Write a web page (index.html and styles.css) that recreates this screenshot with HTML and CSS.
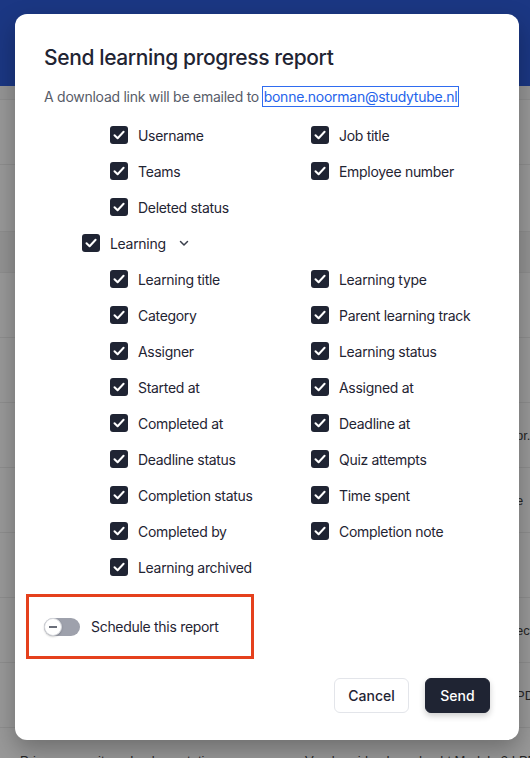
FILE: index.html
```html
<!DOCTYPE html>
<html lang="en">
<head>
<meta charset="utf-8">
<title>Send learning progress report</title>
<link rel="stylesheet" href="styles.css">
</head>
<body>
<div class="page">
  <header class="navbar"></header>
  <div class="table">
    <div class="trow thead"></div>
    <div class="trow"></div>
    <div class="trow tall"></div>
    <div class="trow band"></div>
    <div class="trow"></div>
    <div class="trow"></div>
    <div class="trow"><span class="c1"></span><span class="c2"></span><span class="c3"></span><span class="c4">pr.</span></div>
    <div class="trow"><span class="c1"></span><span class="c2"></span><span class="c3"></span><span class="c4">e</span></div>
    <div class="trow"></div>
    <div class="trow"><span class="c1"></span><span class="c2"></span><span class="c3"></span><span class="c4">ect</span></div>
    <div class="trow"><span class="c1"></span><span class="c2"></span><span class="c3"></span><span class="c4">PD</span></div>
    <div class="trow"><span class="c1">Privacy security</span><span class="c2">Implementation</span><span class="c3">Voorbereidende opdracht Module 2 LPD</span><span class="c4"></span></div>
  </div>
</div>

<div class="modal" role="dialog">
  <h1 class="title">Send learning progress report</h1>
  <p class="subtitle">A download link will be emailed to <a class="email" href="#">bonne.noorman@studytube.nl</a></p>

  <div class="grid user-grid">
    <label class="cb"><span class="box"><svg viewBox="0 0 18 18"><path d="M4.5 9.2 7.6 12.3 13.6 5.8"/></svg></span>Username</label>
    <label class="cb"><span class="box"><svg viewBox="0 0 18 18"><path d="M4.5 9.2 7.6 12.3 13.6 5.8"/></svg></span>Job title</label>
    <label class="cb"><span class="box"><svg viewBox="0 0 18 18"><path d="M4.5 9.2 7.6 12.3 13.6 5.8"/></svg></span>Teams</label>
    <label class="cb"><span class="box"><svg viewBox="0 0 18 18"><path d="M4.5 9.2 7.6 12.3 13.6 5.8"/></svg></span>Employee number</label>
    <label class="cb"><span class="box"><svg viewBox="0 0 18 18"><path d="M4.5 9.2 7.6 12.3 13.6 5.8"/></svg></span>Deleted status</label>
  </div>

  <div class="group-head">
    <label class="cb"><span class="box"><svg viewBox="0 0 18 18"><path d="M4.5 9.2 7.6 12.3 13.6 5.8"/></svg></span>Learning</label>
    <svg class="chev" viewBox="0 0 12 12"><path d="M2.5 4.5 6 8 9.5 4.5"/></svg>
  </div>

  <div class="grid learn-grid">
    <label class="cb"><span class="box"><svg viewBox="0 0 18 18"><path d="M4.5 9.2 7.6 12.3 13.6 5.8"/></svg></span>Learning title</label>
    <label class="cb"><span class="box"><svg viewBox="0 0 18 18"><path d="M4.5 9.2 7.6 12.3 13.6 5.8"/></svg></span>Learning type</label>
    <label class="cb"><span class="box"><svg viewBox="0 0 18 18"><path d="M4.5 9.2 7.6 12.3 13.6 5.8"/></svg></span>Category</label>
    <label class="cb"><span class="box"><svg viewBox="0 0 18 18"><path d="M4.5 9.2 7.6 12.3 13.6 5.8"/></svg></span>Parent learning track</label>
    <label class="cb"><span class="box"><svg viewBox="0 0 18 18"><path d="M4.5 9.2 7.6 12.3 13.6 5.8"/></svg></span>Assigner</label>
    <label class="cb"><span class="box"><svg viewBox="0 0 18 18"><path d="M4.5 9.2 7.6 12.3 13.6 5.8"/></svg></span>Learning status</label>
    <label class="cb"><span class="box"><svg viewBox="0 0 18 18"><path d="M4.5 9.2 7.6 12.3 13.6 5.8"/></svg></span>Started at</label>
    <label class="cb"><span class="box"><svg viewBox="0 0 18 18"><path d="M4.5 9.2 7.6 12.3 13.6 5.8"/></svg></span>Assigned at</label>
    <label class="cb"><span class="box"><svg viewBox="0 0 18 18"><path d="M4.5 9.2 7.6 12.3 13.6 5.8"/></svg></span>Completed at</label>
    <label class="cb"><span class="box"><svg viewBox="0 0 18 18"><path d="M4.5 9.2 7.6 12.3 13.6 5.8"/></svg></span>Deadline at</label>
    <label class="cb"><span class="box"><svg viewBox="0 0 18 18"><path d="M4.5 9.2 7.6 12.3 13.6 5.8"/></svg></span>Deadline status</label>
    <label class="cb"><span class="box"><svg viewBox="0 0 18 18"><path d="M4.5 9.2 7.6 12.3 13.6 5.8"/></svg></span>Quiz attempts</label>
    <label class="cb"><span class="box"><svg viewBox="0 0 18 18"><path d="M4.5 9.2 7.6 12.3 13.6 5.8"/></svg></span>Completion status</label>
    <label class="cb"><span class="box"><svg viewBox="0 0 18 18"><path d="M4.5 9.2 7.6 12.3 13.6 5.8"/></svg></span>Time spent</label>
    <label class="cb"><span class="box"><svg viewBox="0 0 18 18"><path d="M4.5 9.2 7.6 12.3 13.6 5.8"/></svg></span>Completed by</label>
    <label class="cb"><span class="box"><svg viewBox="0 0 18 18"><path d="M4.5 9.2 7.6 12.3 13.6 5.8"/></svg></span>Completion note</label>
    <label class="cb"><span class="box"><svg viewBox="0 0 18 18"><path d="M4.5 9.2 7.6 12.3 13.6 5.8"/></svg></span>Learning archived</label>
  </div>

  <div class="schedule">
    <span class="toggle"><span class="knob"></span></span>
    <span class="schedule-label">Schedule this report</span>
  </div>

  <div class="footer">
    <button class="btn btn-cancel" type="button">Cancel</button>
    <button class="btn btn-send" type="button">Send</button>
  </div>
</div>
</body>
</html>
```

FILE: styles.css
```css
* { box-sizing: border-box; }
html, body { margin: 0; padding: 0; }
body {
  width: 530px;
  height: 758px;
  overflow: hidden;
  background: #999999;
  font-family: "Inter", "Liberation Sans", sans-serif;
  position: relative;
}
.page { width: 530px; }
.navbar { height: 86px; background: #1b3783; }
.table { display: flex; flex-direction: column; }
.trow {
  height: 65px;
  flex: none;
  border-bottom: 1px solid #8e8e8e;
  display: grid;
  grid-template-columns: 20px 110px 175px 211px 1fr;
  align-items: center;
  font-family: "Liberation Sans", Arial, sans-serif;
  font-size: 13px;
  color: #262626;
  white-space: nowrap;
}
.trow::before { content: ""; }
.trow.thead { height: 14px; background: #959595; }
.trow.tall { height: 67px; }
.trow.band { height: 41px; background: #939393; }
.trow .c4 { overflow: hidden; }

.modal {
  position: absolute;
  left: 15px;
  top: 14px;
  width: 504px;
  height: 726px;
  background: #ffffff;
  border-radius: 12px;
  box-shadow: 0 10px 24px rgba(0,0,0,0.28);
  padding: 30px 29px 27px 29px;
  display: flex;
  flex-direction: column;
  color: #1f2433;
}
.title {
  margin: 0;
  font-size: 21px;
  line-height: 28px;
  font-weight: 500;
  letter-spacing: -0.38px;
  color: #1f2433;
}
.subtitle {
  margin: 15px 0 0 0;
  font-size: 14px;
  line-height: 20px;
  letter-spacing: -0.26px;
  color: #585c68;
}
.email {
  color: #2563eb;
  text-decoration: none;
  outline: 1px solid #2f6cf0;
  outline-offset: 0;
  padding: 1px 1px;
}
.grid {
  display: grid;
  grid-template-columns: 201px 1fr;
  grid-auto-rows: 36px;
}
.user-grid { margin: 10px 0 0 66px; }
.learn-grid { margin-left: 66px; }
.group-head {
  margin-left: 38px;
  height: 36px;
  display: flex;
  align-items: center;
}
.cb {
  display: flex;
  align-items: center;
  gap: 10px;
  font-size: 14px;
  letter-spacing: -0.3px;
  color: #1f2433;
}
.box {
  width: 18px;
  height: 18px;
  border-radius: 3px;
  background: #1f2433;
  display: inline-flex;
  flex: none;
}
.box svg { width: 18px; height: 18px; }
.box path { fill: none; stroke: #fff; stroke-width: 2; stroke-linecap: round; stroke-linejoin: round; }
.chev { width: 12px; height: 12px; margin-left: 12px; }
.chev path { fill: none; stroke: #3a3f4c; stroke-width: 1.5; stroke-linecap: round; stroke-linejoin: round; }

.schedule {
  margin: 9px 0 0 -18px;
  width: 228px;
  height: 65px;
  flex: none;
  border: 3px solid #e5401d;
  display: flex;
  align-items: center;
  padding-left: 15px;
  gap: 11px;
}
.toggle {
  width: 36px;
  height: 18px;
  border-radius: 9px;
  background: #9ea1ac;
  display: inline-flex;
  align-items: center;
  flex: none;
}
.knob {
  width: 18px;
  height: 18px;
  border-radius: 50%;
  background: #ffffff;
  border: 1px solid #d5d7dc;
  box-shadow: 0 1px 2px rgba(0,0,0,0.2);
  position: relative;
}
.knob::after {
  content: "";
  position: absolute;
  left: 4px;
  right: 4px;
  top: 7.5px;
  height: 1.5px;
  background: #6b6f7a;
}
.schedule-label { font-size: 14px; letter-spacing: -0.3px; color: #1f2433; }

.footer {
  margin-top: 19px;
  display: flex;
  justify-content: flex-end;
  gap: 16px;
}
.btn {
  height: 35px;
  border-radius: 6px;
  font-family: inherit;
  font-size: 14px;
  font-weight: 500;
  padding: 0 12px;
  cursor: pointer;
}
.btn-cancel {
  width: 75px;
  background: #fff;
  border: 1px solid #e3e5ea;
  color: #1f2433;
}
.btn-send {
  width: 65px;
  background: #1f2433;
  border: 1px solid #1f2433;
  color: #fff;
  box-shadow: 0 3px 6px rgba(0,0,0,0.2);
}
```
